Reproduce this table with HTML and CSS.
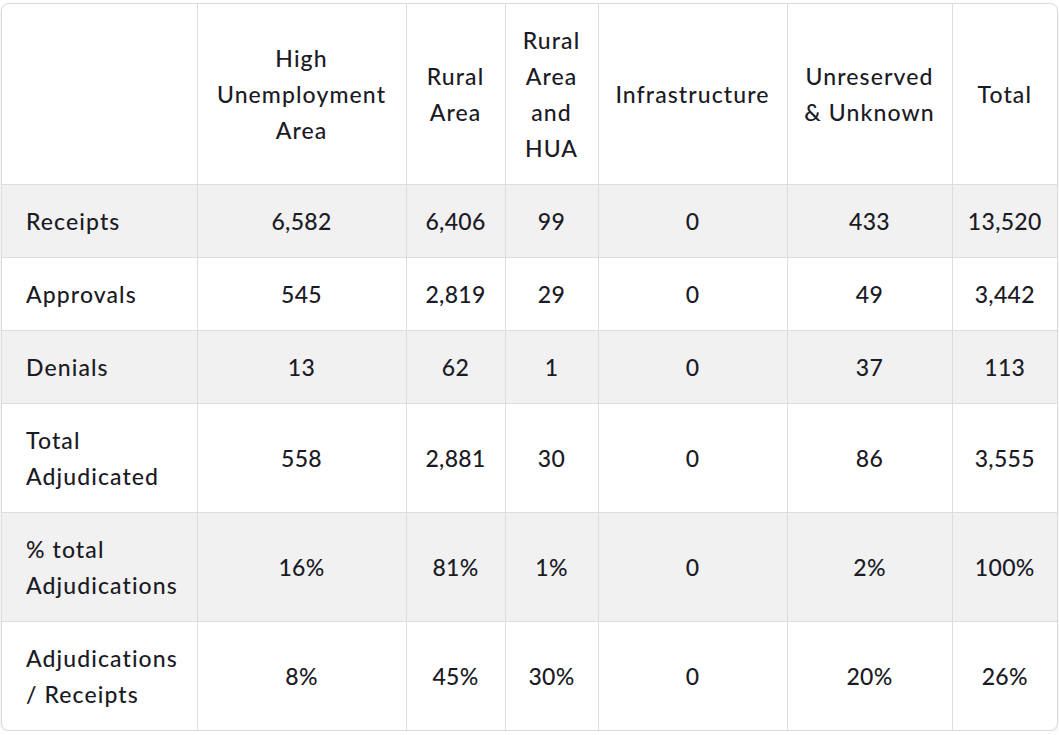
FILE: index.html
```html
<!DOCTYPE html>
<html lang="en">
<head>
<meta charset="utf-8">
<title>Table</title>
<link rel="stylesheet" href="styles.css">
</head>
<body>
<div class="card">
<table class="data">
<colgroup>
<col class="c1"><col class="c2"><col class="c3"><col class="c4"><col class="c5"><col class="c6"><col class="c7">
</colgroup>
<thead>
<tr>
<th></th>
<th>High Unemployment Area</th>
<th>Rural Area</th>
<th>Rural Area and HUA</th>
<th>Infrastructure</th>
<th>Unreserved &amp; Unknown</th>
<th>Total</th>
</tr>
</thead>
<tbody>
<tr class="alt"><td>Receipts</td><td>6,582</td><td>6,406</td><td>99</td><td>0</td><td>433</td><td>13,520</td></tr>
<tr><td>Approvals</td><td>545</td><td>2,819</td><td>29</td><td>0</td><td>49</td><td>3,442</td></tr>
<tr class="alt"><td>Denials</td><td>13</td><td>62</td><td>1</td><td>0</td><td>37</td><td>113</td></tr>
<tr><td>Total Adjudicated</td><td>558</td><td>2,881</td><td>30</td><td>0</td><td>86</td><td>3,555</td></tr>
<tr class="alt"><td>% total Adjudications</td><td>16%</td><td>81%</td><td>1%</td><td>0</td><td>2%</td><td>100%</td></tr>
<tr><td>Adjudications / Receipts</td><td>8%</td><td>45%</td><td>30%</td><td>0</td><td>20%</td><td>26%</td></tr>
</tbody>
</table>
</div>
</body>
</html>
```
FILE: styles.css
```css
html, body {
  margin: 0;
  padding: 0;
  background: #ffffff;
}
body {
  padding: 3px 1px 0 1px;
  font-family: "Lato", "Noto Sans", sans-serif;
  color: #1b1b26;
}
.card {
  width: 1057px;
  border: 1px solid #dcdcdc;
  border-radius: 8px;
  overflow: hidden;
  box-shadow: 0 1px 3px rgba(0,0,0,0.12);
  box-sizing: border-box;
}
.data {
  width: 100%;
  table-layout: fixed;
  border-collapse: collapse;
  font-size: 23px;
  line-height: 36px;
  font-weight: 500;
}
.c1 { width: 195px; }
.c2 { width: 209px; }
.c3 { width: 99px; }
.c4 { width: 93px; }
.c5 { width: 189px; }
.c6 { width: 165px; }
.c7 { width: 105px; }
.data th, .data td {
  padding: 18px 12px;
  border: 1px solid #dddddd;
  text-align: center;
  vertical-align: middle;
  font-weight: 500;
  letter-spacing: 0.3px;
}
.data th { letter-spacing: 1.1px; }
.data td:first-child {
  padding-left: 24px;
  padding-right: 12px;
  letter-spacing: 1.1px;
}
.data tr > :first-child { border-left: none; text-align: left; }
.data tr > :last-child { border-right: none; }
.data thead tr th { border-top: none; }
.data tbody tr:last-child td { border-bottom: none; }
.data tr.alt td { background: #f1f1f1; }
```
